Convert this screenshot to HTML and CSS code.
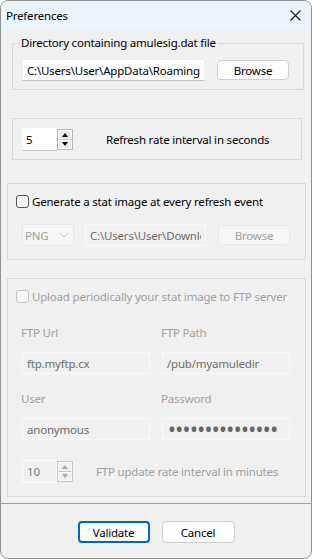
FILE: index.html
```html
<!DOCTYPE html>
<html lang="en">
<head>
    <meta charset="UTF-8">
    <meta name="viewport" content="width=device-width, initial-scale=1.0">
    <title>Preferences</title>
    <link rel="stylesheet" href="styles.css">
</head>
<body>
    <div class="window">
        <div class="titlebar">
            <span class="title">Preferences</span>
            <svg class="close" width="11" height="11" viewBox="0 0 11 11">
                <path d="M0.5 0.5 L10.5 10.5 M10.5 0.5 L0.5 10.5" stroke="#1a1a1a" stroke-width="1.1" fill="none"/>
            </svg>
        </div>

        <fieldset class="group g1">
            <legend>Directory containing amulesig.dat file</legend>
            <div class="row">
                <input type="text" class="text dir" value="C:\Users\User\AppData\Roaming\aMule">
                <button type="button" class="btn">Browse</button>
            </div>
        </fieldset>

        <div class="group g2">
            <div class="row">
                <div class="spin">
                    <input type="text" value="5">
                    <div class="spin-btns">
                        <span class="up"><i></i></span>
                        <span class="down"><i></i></span>
                    </div>
                </div>
                <span class="spin-label">Refresh rate interval in seconds</span>
            </div>
        </div>

        <div class="group g3">
            <label class="check"><span class="box"></span>Generate a stat image at every refresh event</label>
            <div class="row sub">
                <div class="select">
                    <span>PNG</span>
                    <svg width="8" height="5" viewBox="0 0 8 5"><path d="M0.5 0.5 L4 4 L7.5 0.5" stroke="#bdbdbd" fill="none"/></svg>
                </div>
                <input type="text" class="text off img-path" value="C:\Users\User\Downloads\stat.png" disabled>
                <button type="button" class="btn off" disabled>Browse</button>
            </div>
        </div>

        <div class="group g4 disabled">
            <label class="check"><span class="box"></span>Upload periodically your stat image to FTP server</label>
            <div class="fields">
                <div class="field">
                    <span class="caption">FTP Url</span>
                    <input type="text" class="text off" value="ftp.myftp.cx" disabled>
                </div>
                <div class="field">
                    <span class="caption">FTP Path</span>
                    <input type="text" class="text off" value="/pub/myamuledir" disabled>
                </div>
                <div class="field">
                    <span class="caption">User</span>
                    <input type="text" class="text off" value="anonymous" disabled>
                </div>
                <div class="field">
                    <span class="caption">Password</span>
                    <input type="password" class="text off pw" value="aaaaaaaaaaaaaaa" disabled>
                </div>
            </div>
            <div class="row sub ftp-rate">
                <div class="spin off">
                    <input type="text" value="10" disabled>
                    <div class="spin-btns">
                        <span class="up"><i></i></span>
                        <span class="down"><i></i></span>
                    </div>
                </div>
                <span class="spin-label">FTP update rate interval in minutes</span>
            </div>
        </div>

        <div class="separator"></div>

        <div class="footer">
            <button type="button" class="btn default">Validate</button>
            <button type="button" class="btn cancel">Cancel</button>
        </div>
    </div>
</body>
</html>
```

FILE: styles.css
```css
*{
    margin: 0;
    padding: 0;
    box-sizing: border-box;
}
body{
    background: #fff;
    font-family: "Noto Sans", sans-serif;
    font-size: 11.5px;
    letter-spacing: -0.2px;
    color: #000;
}
.window{
    width: 312px;
    height: 559px;
    border: 1px solid #8f8f8f;
    border-radius: 8px;
    background: #f0f0f0;
    overflow: hidden;
}
.titlebar{
    height: 28px;
    background: #e9f5fa;
    display: flex;
    align-items: center;
    justify-content: space-between;
    padding: 0 10px 0 5px;
}
.close{
    display: block;
}

.group{
    border: 1px solid #d9d9d9;
}
fieldset.group{
    min-width: 0;
}
.g1{
    margin: 6px 0 0 11px;
    width: 292px;
    padding: 8px 12px 8px 9px;
}
.g1 legend{
    margin-left: -3px;
    padding: 0 2px;
    line-height: 16px;
}
.g2{
    margin: 28px 0 0 11px;
    width: 290px;
    padding: 9px 0 8px 9px;
}
.g3{
    margin: 23px 0 0 6px;
    width: 299px;
    padding: 9px 0 13px 8px;
}
.g4{
    margin: 18px 0 0 6px;
    width: 299px;
    padding: 9px 0 13px 8px;
}

.row{
    display: flex;
    align-items: center;
}
.sub{
    margin-left: 6px;
    margin-top: 15px;
}

input.text{
    height: 22px;
    font: inherit;
    letter-spacing: inherit;
    background: #fff;
    border: 1px solid #ececec;
    border-bottom-color: #c4c4c4;
    padding: 0 4px;
    outline: none;
}
.dir{
    width: 183px;
}
input.off{
    background: #f0f0f0;
    border-color: #f8f8f8;
    color: #6d6d6d;
}
.img-path{
    width: 121px;
    margin-left: 11px;
    border-color: #dadada;
    border-bottom-color: #a8a8a8;
}
input.pw{
    font-size: 21px;
    letter-spacing: -0.6px;
    padding-left: 5px;
    color: #666;
}

.btn{
    width: 72px;
    height: 20px;
    margin-left: 12px;
    font: inherit;
    letter-spacing: inherit;
    color: #000;
    background: #fdfdfd;
    border: 1px solid #d0d0d0;
    border-radius: 4px;
}
.btn.off{
    background: #f5f5f5;
    border-color: #e8e8e8;
    color: #a0a0a0;
}

.spin{
    display: flex;
    height: 23px;
}
.spin input{
    width: 35px;
    height: 23px;
    font: inherit;
    color: #000;
    background: #fff;
    border: none;
    border-bottom: 1px solid #c8c8c8;
    padding-left: 4px;
    outline: none;
}
.spin-btns{
    width: 16px;
    margin: 1px 0;
    border: 1px solid #b9b9b9;
    background: #ececec;
    display: flex;
    flex-direction: column;
}
.spin-btns span{
    flex: 1;
    display: flex;
    align-items: center;
    justify-content: center;
    border: 1px solid #fafafa;
}
.spin-btns .up{
    border-bottom-color: #c8c8c8;
}
.spin-btns i{
    width: 0;
    height: 0;
    border-left: 3px solid transparent;
    border-right: 3px solid transparent;
}
.up i{
    border-bottom: 4px solid #000;
}
.down i{
    border-top: 4px solid #000;
}
.spin-label{
    margin-left: 33px;
}
.spin.off input{
    background: #f0f0f0;
    border: 1px solid #fafafa;
    color: #7d7d9a;
}
.spin.off .spin-btns{
    border-color: #c8c8c8;
    background: #f0f0f0;
}
.spin.off .up i{
    border-bottom-color: #a8a8a8;
}
.spin.off .down i{
    border-top-color: #a8a8a8;
}
.ftp-rate{
    margin-top: 20px;
}
.ftp-rate .spin-label{
    margin-left: 23px;
    color: #a0a0a0;
}

.check{
    display: flex;
    align-items: center;
    height: 16px;
    white-space: nowrap;
}
.box{
    width: 13px;
    height: 13px;
    margin-right: 3px;
    border: 1px solid #555;
    border-radius: 3px;
    background: #f7f7f7;
}
.disabled .check{
    color: #a0a0a0;
}
.disabled .box{
    border-color: #c4c4c4;
}

.select{
    width: 52px;
    height: 22px;
    padding: 0 5px 0 2px;
    background: #f6f6f6;
    border: 1px solid #e6e6e6;
    color: #a0a0a0;
    display: flex;
    align-items: center;
    justify-content: space-between;
}

.fields{
    display: grid;
    grid-template-columns: 128px 128px;
    column-gap: 12px;
    row-gap: 17px;
    margin: 21px 0 0 6px;
}
.field{
    display: flex;
    flex-direction: column;
}
.caption{
    line-height: 16px;
    margin: 0 0 11px -1px;
    color: #a0a0a0;
}
.field input{
    width: 128px;
}

.separator{
    height: 1px;
    margin-top: 6px;
    background: #a0a0a0;
}
.footer{
    display: flex;
    justify-content: center;
    padding-top: 17px;
}
.footer .btn{
    height: 22px;
    margin: 0;
}
.default{
    border: 2px solid #0067c0;
}
.cancel{
    width: 73px;
    margin-left: 12px !important;
}
```
